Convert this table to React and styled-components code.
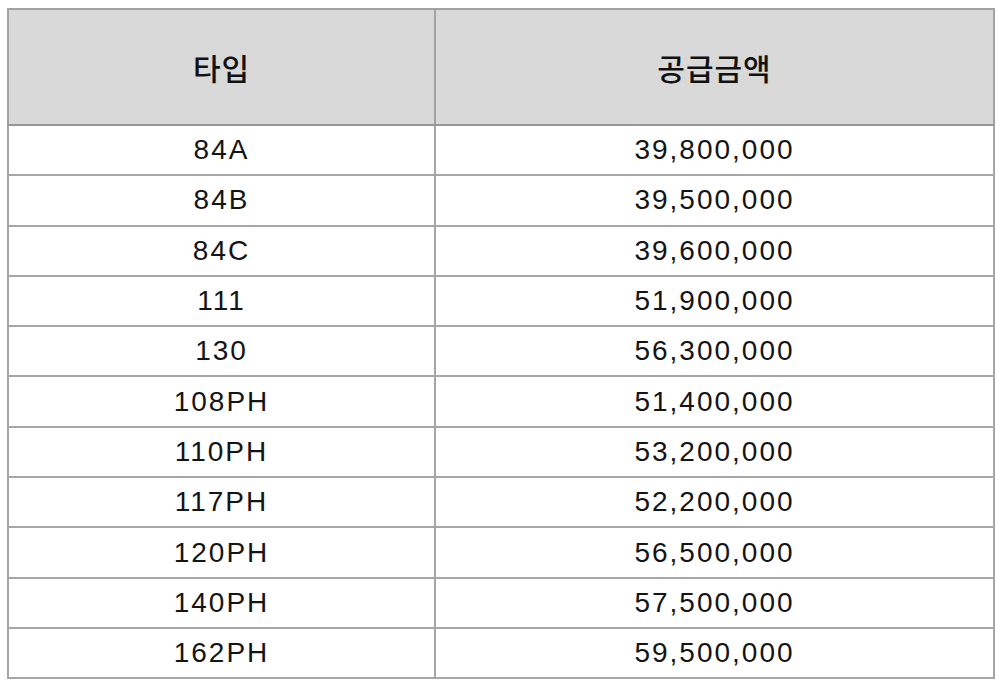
import React from "react";
import styled, { createGlobalStyle } from "styled-components";

const Global = createGlobalStyle`
  html, body { margin: 0; padding: 0; background: #ffffff; }
  body { font-family: "Liberation Sans", Arial, sans-serif; }
`;

const Page = styled.div`
  padding: 8px 0 0 7px;
`;

const Table = styled.table`
  border-collapse: collapse;
  width: 988px;
  table-layout: fixed;
`;

const HeadCell = styled.th`
  height: 114px;
  padding: 0;
  background: #d9d9d9;
  border: 2px solid #a2a2a2;
  border-bottom-color: #979797;
  font-family: "Noto Sans CJK KR", "Noto Sans", sans-serif;
  font-weight: 500;
  font-size: 30px;
  letter-spacing: 1px;
  color: #111111;
  text-align: center;
  vertical-align: middle;
  width: ${(p) => p.$w || "auto"};
`;

const Cell = styled.td`
  height: 48.3px;
  padding: 0;
  border: 2px solid #a6a6a6;
  font-family: "Liberation Sans", Arial, sans-serif;
  font-size: 28px;
  letter-spacing: 2px;
  color: #141414;
  text-align: center;
  vertical-align: middle;
  line-height: 1;
`;

const rows = [
  ["84A", "39,800,000"],
  ["84B", "39,500,000"],
  ["84C", "39,600,000"],
  ["111", "51,900,000"],
  ["130", "56,300,000"],
  ["108PH", "51,400,000"],
  ["110PH", "53,200,000"],
  ["117PH", "52,200,000"],
  ["120PH", "56,500,000"],
  ["140PH", "57,500,000"],
  ["162PH", "59,500,000"],
];

export default function App() {
  return (
    <Page>
      <Global />
      <Table>
        <thead>
          <tr>
            <HeadCell $w="425px">타입</HeadCell>
            <HeadCell>공급금액</HeadCell>
          </tr>
        </thead>
        <tbody>
          {rows.map(([t, p]) => (
            <tr key={t}>
              <Cell>{t}</Cell>
              <Cell>{p}</Cell>
            </tr>
          ))}
        </tbody>
      </Table>
    </Page>
  );
}
